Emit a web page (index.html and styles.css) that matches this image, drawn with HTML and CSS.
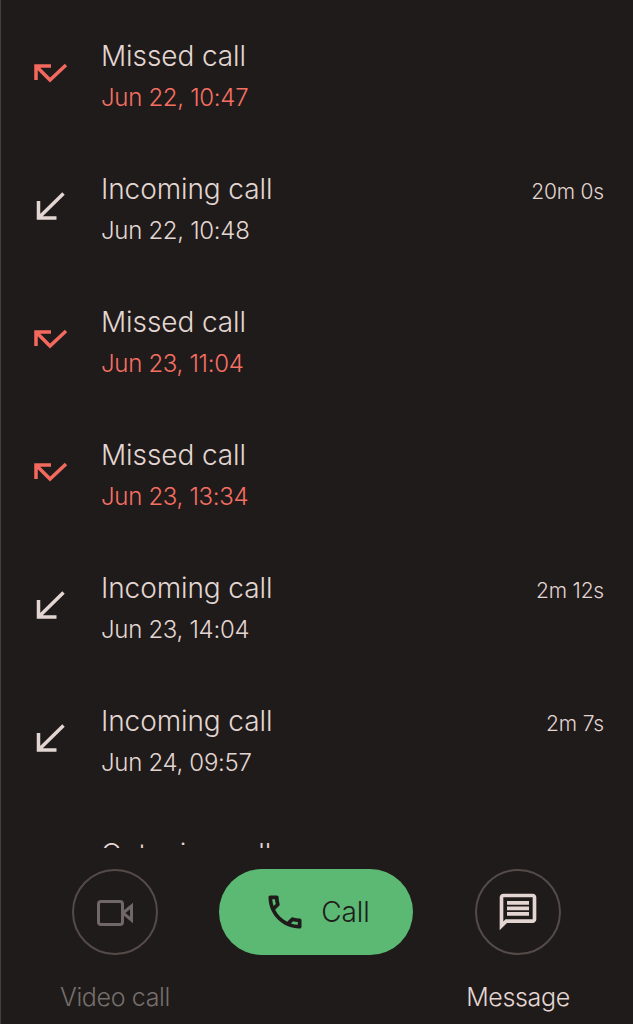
FILE: index.html
```html
<!doctype html>
<html lang="en">
  <head>
    <meta charset="UTF-8" />
    <meta name="viewport" content="width=device-width, initial-scale=1.0" />
    <title>Call history</title>
    <link rel="stylesheet" href="styles.css">
  </head>
  <body>
    <div class="screen">
      <div class="call-list">
        <div class="call-row missed">
          <svg class="call-icon" viewBox="0 0 40 32"><path d="M3 23V9h15M4 10l13 13L33 8"/></svg>
          <div class="call-text">
            <div class="call-title">Missed call</div>
            <div class="call-date">Jun 22, 10:47</div>
          </div>
        </div>
        <div class="call-row">
          <svg class="call-icon" viewBox="0 0 40 32"><path d="M30.5 3.5L5.5 28M5.5 11v17h18"/></svg>
          <div class="call-text">
            <div class="call-title">Incoming call</div>
            <div class="call-date">Jun 22, 10:48</div>
          </div>
          <div class="call-length">20m 0s</div>
        </div>
        <div class="call-row missed">
          <svg class="call-icon" viewBox="0 0 40 32"><path d="M3 23V9h15M4 10l13 13L33 8"/></svg>
          <div class="call-text">
            <div class="call-title">Missed call</div>
            <div class="call-date">Jun 23, 11:04</div>
          </div>
        </div>
        <div class="call-row missed">
          <svg class="call-icon" viewBox="0 0 40 32"><path d="M3 23V9h15M4 10l13 13L33 8"/></svg>
          <div class="call-text">
            <div class="call-title">Missed call</div>
            <div class="call-date">Jun 23, 13:34</div>
          </div>
        </div>
        <div class="call-row">
          <svg class="call-icon" viewBox="0 0 40 32"><path d="M30.5 3.5L5.5 28M5.5 11v17h18"/></svg>
          <div class="call-text">
            <div class="call-title">Incoming call</div>
            <div class="call-date">Jun 23, 14:04</div>
          </div>
          <div class="call-length">2m 12s</div>
        </div>
        <div class="call-row">
          <svg class="call-icon" viewBox="0 0 40 32"><path d="M30.5 3.5L5.5 28M5.5 11v17h18"/></svg>
          <div class="call-text">
            <div class="call-title">Incoming call</div>
            <div class="call-date">Jun 24, 09:57</div>
          </div>
          <div class="call-length">2m 7s</div>
        </div>
        <div class="call-row">
          <svg class="call-icon" viewBox="0 0 40 32"><path d="M6 28L31 3M14 3h17v17"/></svg>
          <div class="call-text">
            <div class="call-title">Outgoing call</div>
            <div class="call-date">Jun 24, 10:12</div>
          </div>
        </div>
      </div>

      <div class="action-bar">
        <div class="action disabled">
          <div class="action-circle">
            <svg class="video-icon" viewBox="0 0 48 48"><rect x="7.5" y="13.5" width="24" height="23" rx="2.5"/><path d="M32 25l8.5-7v14z"/></svg>
          </div>
          <div class="action-label">Video call</div>
        </div>
        <div class="call-button">
          <svg class="phone-icon" viewBox="0 0 24 24"><path d="M6.54 5c.06.89.21 1.76.45 2.59l-1.2 1.2c-.41-1.2-.67-2.47-.76-3.79h1.51m9.86 12.02c.85.24 1.72.39 2.6.45v1.49c-1.32-.09-2.59-.35-3.8-.75l1.2-1.19M7.5 3H4c-.55 0-1 .45-1 1 0 9.39 7.61 17 17 17 .55 0 1-.45 1-1v-3.49c0-.55-.45-1-1-1-1.24 0-2.45-.2-3.57-.57-.1-.04-.21-.05-.31-.05-.26 0-.51.1-.71.29l-2.2 2.2c-2.83-1.45-5.15-3.76-6.59-6.59l2.2-2.2c.28-.28.36-.67.25-1.02C8.7 6.45 8.5 5.25 8.5 4c0-.55-.45-1-1-1z"/></svg>
          <span>Call</span>
        </div>
        <div class="action">
          <div class="action-circle">
            <svg class="message-icon" viewBox="0 0 24 24"><path d="M4 4h16v12H5.17L4 17.17V4m0-2c-1.1 0-1.99.9-1.99 2L2 22l4-4h14c1.1 0 2-.9 2-2V4c0-1.1-.9-2-2-2H4zm2 10h12v2H6v-2zm0-3h12v2H6V9zm0-3h12v2H6V6z"/></svg>
          </div>
          <div class="action-label">Message</div>
        </div>
      </div>
    </div>
  </body>
</html>
```

FILE: styles.css
```css
html,
body {
  margin: 0;
  padding: 0;
  background: #1f1b1a;
}

.screen {
  width: 633px;
  height: 1024px;
  box-sizing: border-box;
  border-left: 1px solid #45403e;
  overflow: hidden;
  font-family: Inter, sans-serif;
  font-weight: 350;
  color: #e3d6d2;
  display: flex;
  flex-direction: column;
}

.call-list {
  height: 848px;
  padding-top: 10px;
  box-sizing: border-box;
  overflow: hidden;
  flex-shrink: 0;
}

.call-row {
  height: 133px;
  display: flex;
  align-items: center;
  padding: 0 29px 0 32px;
}

.call-icon {
  width: 40px;
  height: 32px;
  margin-bottom: 7px;
  flex-shrink: 0;
  fill: none;
  stroke: #e3d6d2;
  stroke-width: 3.5;
}

.call-text {
  flex: 1;
  margin-left: 28px;
}

.call-title {
  font-size: 28px;
  line-height: 40px;
  letter-spacing: -0.1px;
}

.call-date {
  font-size: 24px;
  line-height: 40px;
  margin-top: 2px;
  margin-bottom: -1px;
  letter-spacing: -0.3px;
}

.call-length {
  font-size: 21px;
  margin-bottom: 36px;
  letter-spacing: -0.2px;
}

.missed .call-icon {
  stroke: #f4695e;
}

.missed .call-date {
  color: #f76f63;
}

.action-bar {
  display: flex;
  justify-content: space-between;
  padding: 21px 15px 0 14px;
}

.action {
  width: 200px;
  display: flex;
  flex-direction: column;
  align-items: center;
}

.action-circle {
  width: 86px;
  height: 86px;
  box-sizing: border-box;
  border: 2px solid #544b49;
  border-radius: 50%;
  display: flex;
  align-items: center;
  justify-content: center;
}

.action-label {
  font-size: 25px;
  line-height: 34px;
  margin-top: 25px;
  letter-spacing: -0.35px;
}

.disabled {
  color: #756e6b;
}

.video-icon {
  width: 48px;
  height: 48px;
  fill: none;
  stroke: #6f6866;
  stroke-width: 3;
}

.message-icon {
  width: 44px;
  height: 44px;
  fill: #e3d6d2;
}

.call-button {
  width: 194px;
  height: 86px;
  box-sizing: border-box;
  padding-left: 2px;
  margin-left: -1px;
  margin-right: 1px;
  border-radius: 43px;
  background: #5bb974;
  color: #1f1b1a;
  display: flex;
  align-items: center;
  justify-content: center;
  gap: 14px;
  font-size: 28px;
  letter-spacing: -0.1px;
}

.phone-icon {
  width: 44px;
  height: 44px;
  fill: #1f1b1a;
}
```
